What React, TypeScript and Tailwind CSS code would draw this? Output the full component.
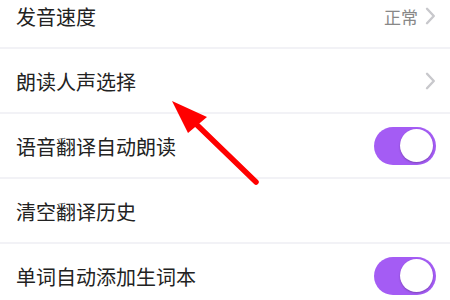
import React from 'react';

type Row = {
  label: string;
  kind: 'link' | 'toggle' | 'plain';
  value?: string;
};

const rows: Row[] = [
  { label: '发音速度', kind: 'link', value: '正常' },
  { label: '朗读人声选择', kind: 'link' },
  { label: '语音翻译自动朗读', kind: 'toggle' },
  { label: '清空翻译历史', kind: 'plain' },
  { label: '单词自动添加生词本', kind: 'toggle' },
];

const Chevron = () => (
  <svg width="11" height="18" viewBox="0 0 11 18" fill="none">
    <path d="M2 1.8 L8.8 9 L2 16.2" stroke="#c8c8cc" strokeWidth="2.4" strokeLinecap="round" strokeLinejoin="round" />
  </svg>
);

const Toggle = () => (
  <div className="w-[62px] h-[38px] rounded-full bg-[#a45cf4] flex items-center justify-end pr-[3px]">
    <div className="w-[33px] h-[33px] rounded-full bg-white shadow-[0_1px_2px_rgba(0,0,0,0.25)]" />
  </div>
);

const App = () => {
  return (
    <div
      className="relative w-[450px] h-[300px] overflow-hidden bg-white"
      style={{ fontFamily: '"Noto Sans CJK SC", "Noto Sans", sans-serif' }}
    >
      <div className="-mt-[16px]">
        {rows.map(row => (
          <div
            key={row.label}
            className="h-[65px] flex items-center justify-between pl-4 pr-[14px] border-b-2 border-[#f2f2f6]"
          >
            <span className="text-[20px] text-[#222222] leading-none pt-[3px]">{row.label}</span>
            {row.kind === 'link' && (
              <div className="flex items-center gap-[7px]">
                {row.value && <span className="text-[17px] text-[#888888] leading-none pt-[2px]">{row.value}</span>}
                <Chevron />
              </div>
            )}
            {row.kind === 'toggle' && <Toggle />}
          </div>
        ))}
      </div>

      {/* red annotation arrow */}
      <svg className="absolute left-0 top-0" width="450" height="300" viewBox="0 0 450 300">
        <line x1="256" y1="182" x2="196" y2="124" stroke="#ff0000" strokeWidth="5.5" strokeLinecap="round" />
        <polygon points="172,101 207,117 188,133" fill="#ff0000" />
      </svg>
    </div>
  );
};

export default App;
